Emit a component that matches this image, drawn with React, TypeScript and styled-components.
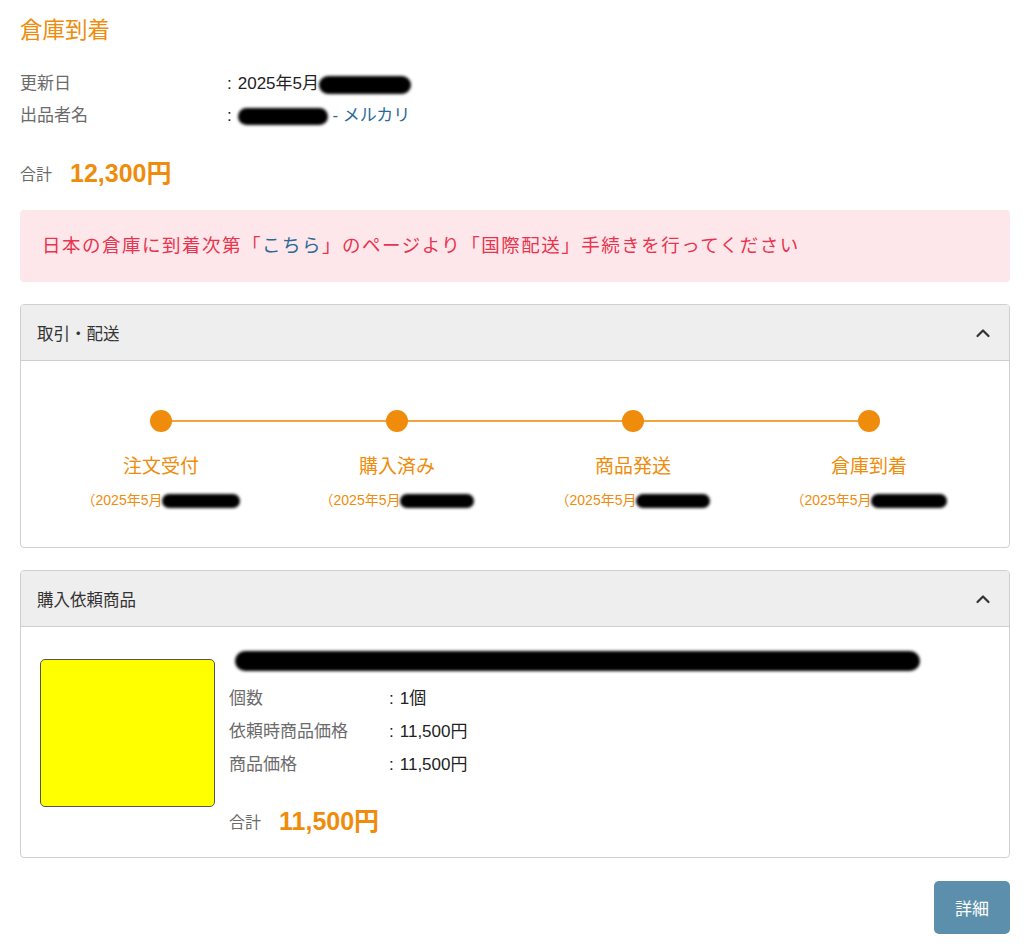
import React from "react";
import styled, { createGlobalStyle } from "styled-components";

const ORANGE = "#f08c0c";

const Global = createGlobalStyle`
  html, body { margin: 0; padding: 0; background: #fff; }
  body {
    font-family: "Liberation Sans", "Noto Sans CJK JP", sans-serif;
    color: #222;
  }
`;

const Page = styled.div`
  padding: 0 14px 12px 20px;
  display: flex;
  flex-direction: column;
`;

const Title = styled.h1`
  margin: 14px 0 0;
  font-size: 22.5px;
  line-height: 34px;
  font-weight: 400;
  color: ${ORANGE};
`;

const InfoList = styled.div`
  margin-top: 20px;
  display: flex;
  flex-direction: column;
`;

const InfoRow = styled.div<{ $labelWidth: number; $h: number }>`
  display: grid;
  grid-template-columns: ${(p) => p.$labelWidth}px 1fr;
  height: ${(p) => p.$h}px;
  line-height: ${(p) => p.$h}px;
  font-size: 17px;
`;

const Label = styled.span`
  color: #6b6b6b;
`;

const Value = styled.span`
  color: #222;
  white-space: nowrap;
`;

const Colon = styled.span`
  margin: 0 6px 0 2px;
`;

const Redact = styled.span<{ $w: number; $h: number }>`
  display: inline-block;
  width: ${(p) => p.$w}px;
  height: ${(p) => p.$h}px;
  background: #000;
  border-radius: ${(p) => p.$h / 2}px;
  filter: blur(1.6px);
  vertical-align: middle;
`;

const Link = styled.span`
  color: #2b6a98;
`;

const TotalRow = styled.div<{ $mt: number }>`
  margin-top: ${(p) => p.$mt}px;
  height: 36px;
  display: flex;
  align-items: center;
  gap: 18px;
`;

const TotalLabel = styled.span`
  color: #6b6b6b;
  font-size: 16px;
  padding-top: 3px;
`;

const TotalValue = styled.span`
  color: ${ORANGE};
  font-size: 25px;
  font-weight: 700;
`;

const Alert = styled.div`
  margin-top: 21px;
  height: 72px;
  background: #fde7ea;
  border-radius: 4px;
  padding: 0 22px;
  display: flex;
  align-items: center;
  padding-bottom: 4px;
  box-sizing: border-box;
  color: #e8344f;
  font-size: 18.5px;
  letter-spacing: 1.5px;
`;

const Panel = styled.section<{ $mt: number }>`
  margin-top: ${(p) => p.$mt}px;
  border: 1px solid #cfcfcf;
  border-radius: 4px;
  overflow: hidden;
`;

const PanelHeader = styled.header`
  height: 55px;
  background: #eeeeee;
  border-bottom: 1px solid #cfcfcf;
  display: flex;
  align-items: center;
  justify-content: space-between;
  padding: 0 18px 0 16px;
  font-size: 16.5px;
  color: #333;
`;

const Chevron = () => (
  <svg width="16" height="12" viewBox="0 0 16 12" fill="none">
    <path d="M2.5 9 L8 3.5 L13.5 9" stroke="#333" strokeWidth="2.2" strokeLinecap="round" strokeLinejoin="round" />
  </svg>
);

const Stepper = styled.div`
  display: grid;
  grid-template-columns: repeat(4, 1fr);
  padding: 49px 22px 37px;
`;

const Step = styled.div<{ $last: boolean }>`
  display: flex;
  flex-direction: column;
  align-items: center;
  position: relative;
  &::after {
    content: "";
    display: ${(p) => (p.$last ? "none" : "block")};
    position: absolute;
    top: 10px;
    left: 50%;
    width: 100%;
    height: 2px;
    background: #f3a23c;
  }
`;

const Dot = styled.span`
  width: 22px;
  height: 22px;
  border-radius: 50%;
  background: ${ORANGE};
  position: relative;
  z-index: 1;
`;

const StepLabel = styled.div`
  margin-top: 22px;
  font-size: 19px;
  line-height: 26px;
  color: ${ORANGE};
`;

const StepDate = styled.div`
  margin-top: 10px;
  font-size: 14px;
  line-height: 20px;
  color: ${ORANGE};
  white-space: nowrap;
`;

const ItemBody = styled.div`
  display: flex;
  padding: 22px 19px 20px;
  gap: 14px;
`;

const Thumb = styled.div`
  margin-top: 10px;
  width: 175px;
  height: 148px;
  box-sizing: border-box;
  background: #ffff00;
  border: 1px solid #555;
  border-radius: 5px;
  flex-shrink: 0;
`;

const ItemInfo = styled.div`
  display: flex;
  flex-direction: column;
`;

const ItemTitle = styled.div`
  height: 24px;
  display: flex;
  align-items: center;
  padding-left: 6px;
  margin-bottom: 9px;
`;

const Footer = styled.div`
  margin-top: 23px;
  display: flex;
  justify-content: flex-end;
`;

const Button = styled.button`
  width: 76px;
  height: 53px;
  border: none;
  border-radius: 5px;
  background: #5b8fab;
  color: #fff;
  font-family: inherit;
  font-size: 17px;
  cursor: pointer;
`;

const steps = [
  { label: "注文受付", w: 78 },
  { label: "購入済み", w: 74 },
  { label: "商品発送", w: 74 },
  { label: "倉庫到着", w: 76 },
];

export default function App() {
  return (
    <>
      <Global />
      <Page>
        <Title>倉庫到着</Title>
        <InfoList>
          <InfoRow $labelWidth={205} $h={32}>
            <Label>更新日</Label>
            <Value>
              <Colon>:</Colon>2025年5月<Redact $w={92} $h={18} />
            </Value>
          </InfoRow>
          <InfoRow $labelWidth={205} $h={32}>
            <Label>出品者名</Label>
            <Value>
              <Colon>:</Colon>
              <Redact $w={90} $h={17} />
              <Link>&nbsp;- メルカリ</Link>
            </Value>
          </InfoRow>
        </InfoList>
        <TotalRow $mt={21}>
          <TotalLabel>合計</TotalLabel>
          <TotalValue>12,300円</TotalValue>
        </TotalRow>

        <Alert>
          日本の倉庫に到着次第「<Link>こちら</Link>」のページより「国際配送」手続きを行ってください
        </Alert>

        <Panel $mt={22}>
          <PanelHeader>
            <span>取引・配送</span>
            <Chevron />
          </PanelHeader>
          <Stepper>
            {steps.map((s, i) => (
              <Step key={s.label} $last={i === steps.length - 1}>
                <Dot />
                <StepLabel>{s.label}</StepLabel>
                <StepDate>
                  （2025年5月<Redact $w={s.w} $h={14} />
                </StepDate>
              </Step>
            ))}
          </Stepper>
        </Panel>

        <Panel $mt={22}>
          <PanelHeader>
            <span>購入依頼商品</span>
            <Chevron />
          </PanelHeader>
          <ItemBody>
            <Thumb />
            <ItemInfo>
              <ItemTitle>
                <Redact $w={685} $h={20} />
              </ItemTitle>
              <InfoRow $labelWidth={158} $h={33}>
                <Label>個数</Label>
                <Value>
                  <Colon>:</Colon>1個
                </Value>
              </InfoRow>
              <InfoRow $labelWidth={158} $h={33}>
                <Label>依頼時商品価格</Label>
                <Value>
                  <Colon>:</Colon>11,500円
                </Value>
              </InfoRow>
              <InfoRow $labelWidth={158} $h={33}>
                <Label>商品価格</Label>
                <Value>
                  <Colon>:</Colon>11,500円
                </Value>
              </InfoRow>
              <TotalRow $mt={20}>
                <TotalLabel>合計</TotalLabel>
                <TotalValue>11,500円</TotalValue>
              </TotalRow>
            </ItemInfo>
          </ItemBody>
        </Panel>

        <Footer>
          <Button>詳細</Button>
        </Footer>
      </Page>
    </>
  );
}
